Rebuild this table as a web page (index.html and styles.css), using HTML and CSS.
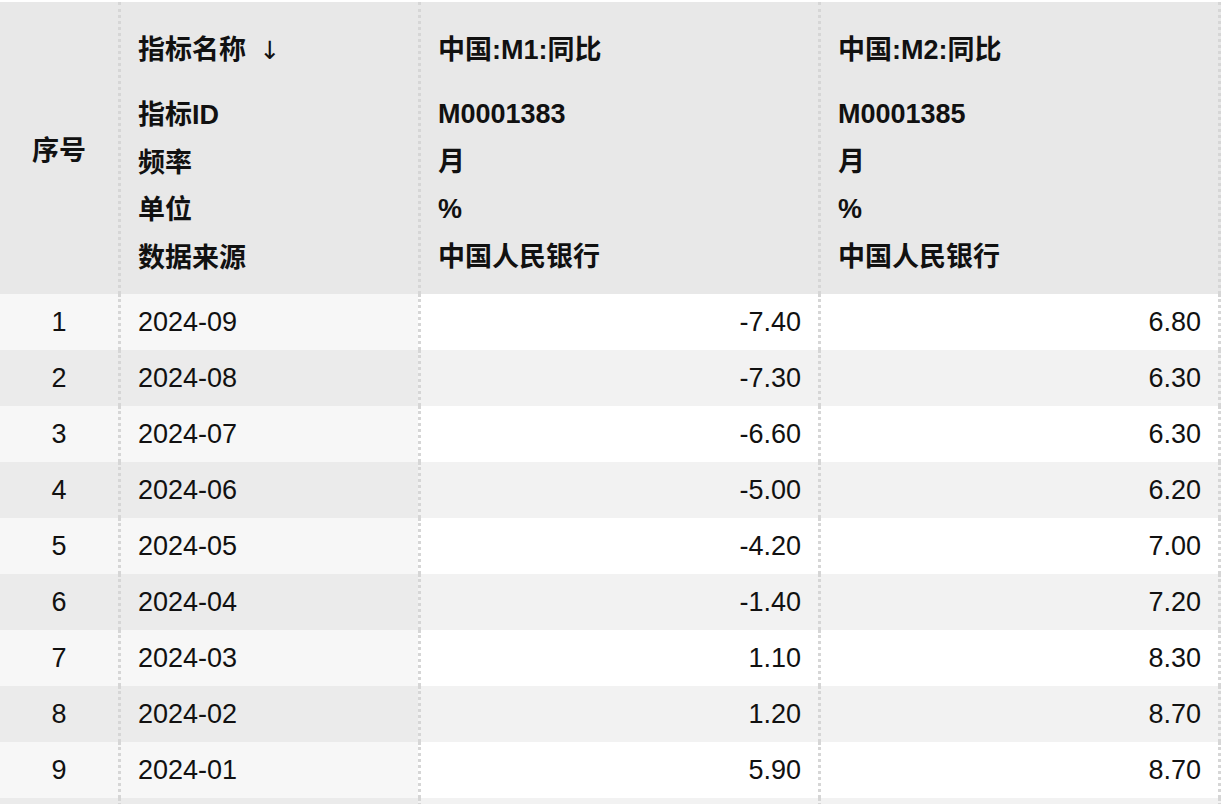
FILE: index.html
```html
<!DOCTYPE html>
<html lang="zh-CN">
<head>
<meta charset="utf-8">
<title>指标数据</title>
<link rel="stylesheet" href="styles.css">
</head>
<body>
<div class="wrap">
<table class="grid">
  <colgroup>
    <col class="c-idx">
    <col class="c-date">
    <col class="c-val">
    <col class="c-val last">
  </colgroup>
  <thead>
    <tr>
      <th class="idx">序号</th>
      <th class="meta sep">
        <div class="title">指标名称 <span class="arrow">↓</span></div>
        <div class="line">指标ID</div>
        <div class="line">频率</div>
        <div class="line">单位</div>
        <div class="line">数据来源</div>
      </th>
      <th class="meta sep">
        <div class="title">中国:M1:同比</div>
        <div class="line">M0001383</div>
        <div class="line">月</div>
        <div class="line">%</div>
        <div class="line">中国人民银行</div>
      </th>
      <th class="meta sep end">
        <div class="title">中国:M2:同比</div>
        <div class="line">M0001385</div>
        <div class="line">月</div>
        <div class="line">%</div>
        <div class="line">中国人民银行</div>
      </th>
    </tr>
  </thead>
  <tbody>
    <tr><td class="idx">1</td><td class="date sep">2024-09</td><td class="num sep">-7.40</td><td class="num sep end">6.80</td></tr>
    <tr><td class="idx">2</td><td class="date sep">2024-08</td><td class="num sep">-7.30</td><td class="num sep end">6.30</td></tr>
    <tr><td class="idx">3</td><td class="date sep">2024-07</td><td class="num sep">-6.60</td><td class="num sep end">6.30</td></tr>
    <tr><td class="idx">4</td><td class="date sep">2024-06</td><td class="num sep">-5.00</td><td class="num sep end">6.20</td></tr>
    <tr><td class="idx">5</td><td class="date sep">2024-05</td><td class="num sep">-4.20</td><td class="num sep end">7.00</td></tr>
    <tr><td class="idx">6</td><td class="date sep">2024-04</td><td class="num sep">-1.40</td><td class="num sep end">7.20</td></tr>
    <tr><td class="idx">7</td><td class="date sep">2024-03</td><td class="num sep">1.10</td><td class="num sep end">8.30</td></tr>
    <tr><td class="idx">8</td><td class="date sep">2024-02</td><td class="num sep">1.20</td><td class="num sep end">8.70</td></tr>
    <tr><td class="idx">9</td><td class="date sep">2024-01</td><td class="num sep">5.90</td><td class="num sep end">8.70</td></tr>
    <tr class="tail"><td class="idx"></td><td class="date sep"></td><td class="num sep"></td><td class="num sep end"></td></tr>
  </tbody>
</table>
</div>
</body>
</html>
```
FILE: styles.css
```css
html, body {
  margin: 0;
  padding: 0;
  background: #ffffff;
}
body {
  font-family: "Liberation Sans", "Noto Sans CJK SC", sans-serif;
  color: #111111;
  overflow: hidden;
  height: 804px;
}
.wrap {
  padding-top: 2px;
}
.grid {
  border-collapse: separate;
  border-spacing: 0;
  table-layout: fixed;
  width: 1221px;
}
.c-idx { width: 118px; }
.c-date { width: 300px; }
.c-val { width: 400px; }
.c-val.last { width: 403px; }

.sep {
  border-left: 3px dotted #d6d6d6;
}
.end {
  border-right: 3px dotted #d6d6d6;
}

thead th {
  background: #e8e8e8;
  font-weight: bold;
  font-size: 27px;
  text-align: left;
  height: 292px;
  padding: 0;
}
thead th.idx {
  text-align: center;
  vertical-align: middle;
}
thead th.meta {
  vertical-align: top;
  padding: 24px 17px 10px 17px;
  box-sizing: border-box;
}
.title {
  line-height: 48px;
  margin-bottom: 17px;
}
.arrow {
  font-weight: normal;
  font-family: "DejaVu Sans", sans-serif;
  font-size: 25px;
  margin-left: 6px;
}
.line {
  line-height: 47.7px;
}

tbody td {
  height: 56px;
  padding: 0 17px;
  font-size: 27px;
  vertical-align: middle;
  box-sizing: border-box;
}
tbody td.idx {
  text-align: center;
  padding: 0;
}
tbody td.num {
  text-align: right;
}
tbody tr:nth-child(odd) td { background: #ffffff; }
tbody tr:nth-child(even) td { background: #f2f2f2; }
tbody tr:nth-child(odd) td.idx,
tbody tr:nth-child(odd) td.date { background: #f7f7f7; }
tbody tr:nth-child(even) td.idx,
tbody tr:nth-child(even) td.date { background: #ebebeb; }
```
